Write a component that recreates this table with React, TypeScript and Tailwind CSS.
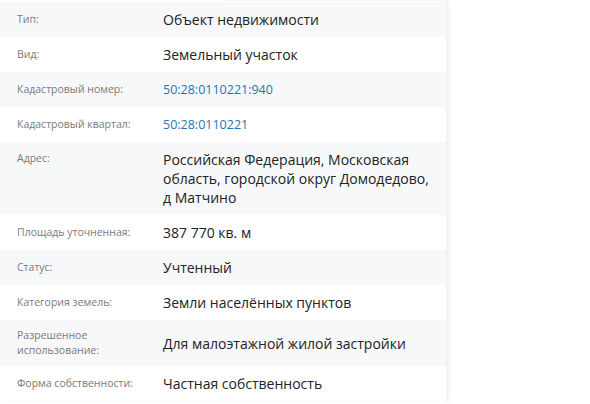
import React from 'react';

type Row = {
  label: React.ReactNode;
  value: React.ReactNode;
  link?: boolean;
  top?: boolean;
};

const rows: Row[] = [
  { label: 'Тип:', value: 'Объект недвижимости' },
  { label: 'Вид:', value: 'Земельный участок' },
  { label: 'Кадастровый номер:', value: '50:28:0110221:940', link: true },
  { label: 'Кадастровый квартал:', value: '50:28:0110221', link: true },
  {
    label: 'Адрес:',
    value: 'Российская Федерация, Московская область, городской округ Домодедово, д Матчино',
    top: true,
  },
  { label: 'Площадь уточненная:', value: '387 770 кв. м' },
  { label: 'Статус:', value: 'Учтенный' },
  { label: 'Категория земель:', value: 'Земли населённых пунктов' },
  {
    label: (
      <>
        Разрешенное
        <br />
        использование:
      </>
    ),
    value: 'Для малоэтажной жилой застройки',
  },
  { label: 'Форма собственности:', value: 'Частная собственность' },
];

export default function App() {
  return (
    <div className="w-[590px] h-[404px] overflow-hidden bg-white font-['Open_Sans',sans-serif]">
      <div className="w-[447px] shadow-[2px_0_4px_rgba(0,0,0,0.06)] border-r border-[#eef0f3]">
        {/* tail of the previous row */}
        <div className="h-[2px] flex">
          <div className="w-[222px] bg-white" />
          <div className="flex-1 bg-[#f3f4f6] h-[1px]" />
        </div>
        {rows.map((r, i) => (
          <div
            key={i}
            className={`flex py-[8px] ${r.top ? 'items-start' : 'items-center'} ${
              i % 2 === 0 ? 'bg-[#f7f8fa]' : 'bg-white'
            }`}
          >
            <div
              className={`w-[163px] shrink-0 pl-[17px] text-[10.5px] leading-[15px] text-[#7a7a7a] ${
                r.top ? 'pt-[1px]' : ''
              }`}
            >
              {r.label}
            </div>
            <div
              className={`w-[270px] leading-[19px] ${
                r.link ? 'text-[#1f74b4] text-[12.5px]' : 'text-[#222] text-[14px]'
              }`}
            >
              {r.value}
            </div>
          </div>
        ))}
      </div>
    </div>
  );
}
